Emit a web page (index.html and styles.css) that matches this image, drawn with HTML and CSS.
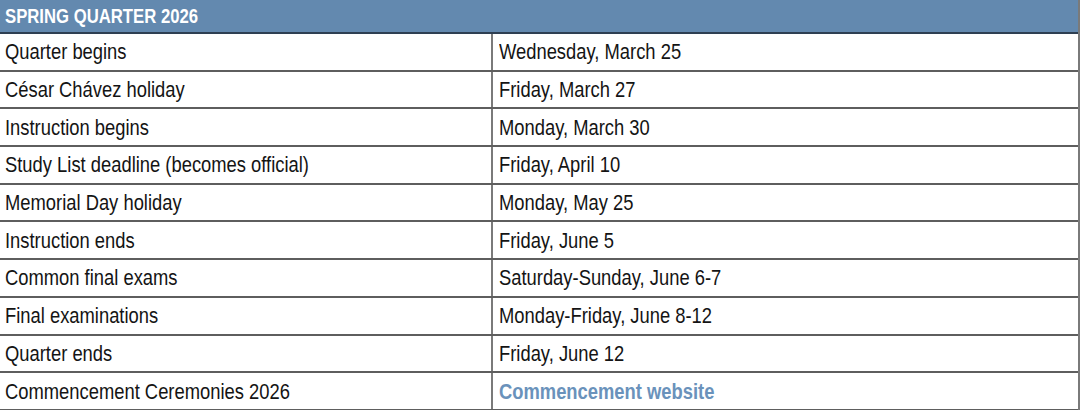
FILE: index.html
```html
<!DOCTYPE html>
<html lang="en">
<head>
<meta charset="utf-8">
<title>Spring Quarter 2026</title>
<link rel="stylesheet" href="styles.css">
</head>
<body>
<div class="calendar">
  <div class="head"><span class="narrow">SPRING QUARTER 2026</span></div>
  <div class="row"><div class="label"><span class="narrow">Quarter begins</span></div><div class="date"><span class="narrow">Wednesday, March 25</span></div></div>
  <div class="row"><div class="label"><span class="narrow">César Chávez holiday</span></div><div class="date"><span class="narrow">Friday, March 27</span></div></div>
  <div class="row"><div class="label"><span class="narrow">Instruction begins</span></div><div class="date"><span class="narrow">Monday, March 30</span></div></div>
  <div class="row"><div class="label"><span class="narrow">Study List deadline (becomes official)</span></div><div class="date"><span class="narrow">Friday, April 10</span></div></div>
  <div class="row"><div class="label"><span class="narrow">Memorial Day holiday</span></div><div class="date"><span class="narrow">Monday, May 25</span></div></div>
  <div class="row"><div class="label"><span class="narrow">Instruction ends</span></div><div class="date"><span class="narrow">Friday, June 5</span></div></div>
  <div class="row"><div class="label"><span class="narrow">Common final exams</span></div><div class="date"><span class="narrow">Saturday-Sunday, June 6-7</span></div></div>
  <div class="row"><div class="label"><span class="narrow">Final examinations</span></div><div class="date"><span class="narrow">Monday-Friday, June 8-12</span></div></div>
  <div class="row"><div class="label"><span class="narrow">Quarter ends</span></div><div class="date"><span class="narrow">Friday, June 12</span></div></div>
  <div class="row"><div class="label"><span class="narrow">Commencement Ceremonies 2026</span></div><div class="date"><a class="narrow link" href="#">Commencement website</a></div></div>
</div>
</body>
</html>
```

FILE: styles.css
```css
html, body {
  margin: 0;
  padding: 0;
  background: #ffffff;
}
body {
  font-family: "Liberation Sans", Arial, sans-serif;
  color: #141414;
}
.calendar {
  width: 1080px;
  box-sizing: border-box;
  border-right: 2px solid #7a7a7a;
}
.narrow {
  display: inline-block;
  white-space: nowrap;
  transform: scaleX(0.835);
  transform-origin: left center;
}
.head {
  height: 34px;
  box-sizing: border-box;
  background: #6389af;
  border-bottom: 2px solid #2e3f52;
  color: #ffffff;
  font-weight: bold;
  font-size: 20px;
  line-height: 32px;
  padding-left: 5px;
}
.row {
  display: grid;
  grid-template-columns: 493px 1fr;
  height: 37.7px;
  box-sizing: border-box;
  border-bottom: 2px solid #5e5e5e;
}
.label, .date {
  display: flex;
  align-items: center;
  font-size: 22px;
  padding-top: 1px;
}
.label {
  padding-left: 5px;
  border-right: 2px solid #7a7a7a;
}
.date {
  padding-left: 6px;
}
.link {
  color: #6a92bb;
  font-weight: bold;
  font-size: 22px;
  text-decoration: none;
}
```
